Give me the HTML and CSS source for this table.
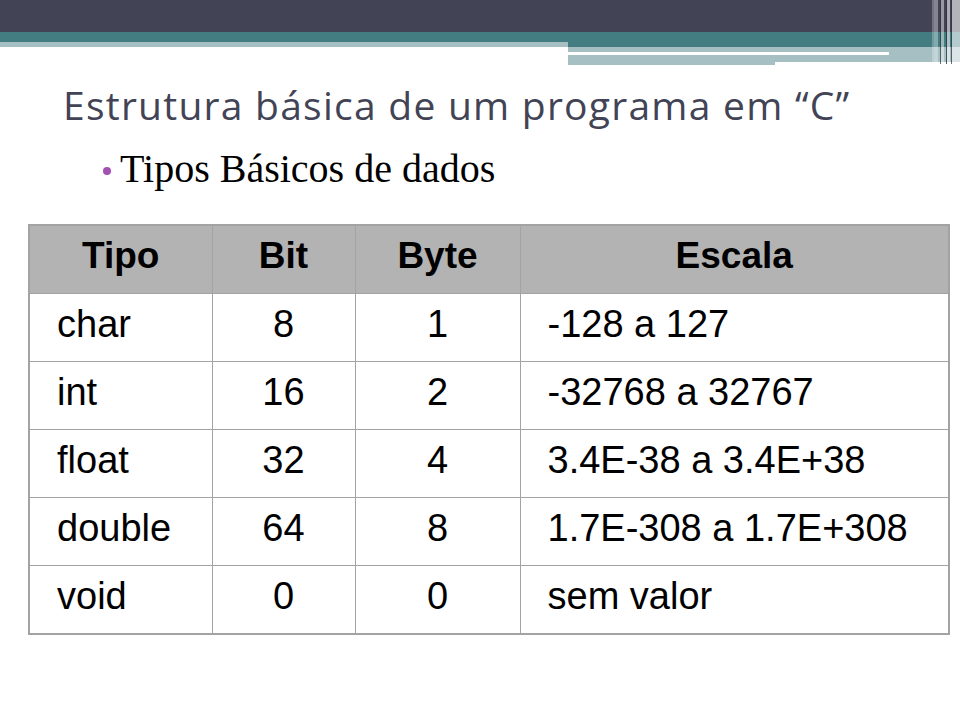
FILE: index.html
```html
<!DOCTYPE html>
<html lang="pt">
<head>
<meta charset="utf-8">
<title>Estrutura básica de um programa em “C”</title>
<link rel="stylesheet" href="styles.css">
</head>
<body>
<div class="slide">
  <header class="topbar">
    <div class="bar-dark"></div>
    <div class="bands">
      <div class="band-left">
        <div class="teal-thin"></div>
        <div class="light-thin"></div>
      </div>
      <div class="band-right">
        <div class="teal-wide"></div>
        <div class="light-a"></div>
        <div class="line-row"><div class="white-line"></div><div class="line-rest"></div></div>
        <div class="light-b"></div>
        <div class="tail-row"><div class="tail"></div></div>
      </div>
    </div>
    <svg class="stripes" width="28" height="64" viewBox="0 0 28 64" aria-hidden="true">
      <rect x="0" y="0" width="2" height="64" fill="#ffffff" fill-opacity="0.25"/>
      <rect x="2" y="0" width="4" height="64" fill="#ffffff" fill-opacity="0.35"/>
      <rect x="8" y="0" width="1" height="64" fill="#30323f" fill-opacity="0.7"/>
      <rect x="9" y="0" width="3" height="64" fill="#ffffff" fill-opacity="0.45"/>
      <rect x="14" y="0" width="1" height="64" fill="#30323f" fill-opacity="0.8"/>
      <rect x="15" y="0" width="3" height="64" fill="#ffffff" fill-opacity="0.55"/>
      <rect x="19" y="0" width="1" height="64" fill="#30323f" fill-opacity="0.7"/>
      <rect x="20" y="0" width="8" height="64" fill="#ffffff" fill-opacity="0.6"/>
    </svg>
  </header>

  <h1 class="title">Estrutura básica de um programa em “C”</h1>
  <ul class="bullets">
    <li>Tipos Básicos de dados</li>
  </ul>

  <table class="types">
    <colgroup>
      <col class="c-tipo">
      <col class="c-bit">
      <col class="c-byte">
      <col class="c-escala">
    </colgroup>
    <thead>
      <tr><th>Tipo</th><th>Bit</th><th>Byte</th><th>Escala</th></tr>
    </thead>
    <tbody>
      <tr><td class="left">char</td><td>8</td><td>1</td><td class="left">-128 a 127</td></tr>
      <tr><td class="left">int</td><td>16</td><td>2</td><td class="left">-32768 a 32767</td></tr>
      <tr><td class="left">float</td><td>32</td><td>4</td><td class="left">3.4E-38 a 3.4E+38</td></tr>
      <tr><td class="left">double</td><td>64</td><td>8</td><td class="left">1.7E-308 a 1.7E+308</td></tr>
      <tr><td class="left">void</td><td>0</td><td>0</td><td class="left">sem valor</td></tr>
    </tbody>
  </table>
</div>
</body>
</html>
```

FILE: styles.css
```css
html, body {
  margin: 0;
  padding: 0;
  background: #ffffff;
}

.slide {
  width: 960px;
  height: 720px;
  position: relative;
  overflow: hidden;
  background: #ffffff;
}

/* ---------- top decorative bar ---------- */
.topbar {
  position: relative;
  height: 65px;
}
.bar-dark {
  height: 32px;
  background: #424456;
}
.bands {
  display: flex;
}
.band-left {
  width: 568px;
}
.teal-thin {
  height: 10px;
  background: #437d81;
}
.light-thin {
  height: 5px;
  background: #a5bfc3;
}
.band-right {
  flex: 1;
}
.teal-wide {
  height: 15px;
  background: #437d81;
}
.light-a {
  height: 5px;
  background: #a5bfc3;
}
.line-row {
  display: flex;
  height: 3px;
}
.white-line {
  width: 321px;
  background: #ffffff;
}
.line-rest {
  flex: 1;
  background: #a5bfc3;
}
.light-b {
  height: 7px;
  background: #a5bfc3;
}
.tail-row {
  height: 3px;
}
.tail {
  width: 207px;
  height: 3px;
  background: #a5bfc3;
}
.stripes {
  position: absolute;
  top: 0;
  right: 0;
  display: block;
}

/* ---------- title ---------- */
.title {
  margin: 16px 0 0 63px;
  font-family: "Open Sans", "Noto Sans", sans-serif;
  font-weight: 400;
  font-size: 39px;
  line-height: 48px;
  color: #424456;
  letter-spacing: 1.25px;
  white-space: nowrap;
}

.bullets {
  margin: 18px 0 0 0;
  padding: 0 0 0 120px;
  list-style: none;
}
.bullets li {
  position: relative;
  font-family: "Liberation Serif", "Times New Roman", serif;
  font-size: 40px;
  line-height: 44px;
  color: #000000;
  white-space: nowrap;
}
.bullets li::before {
  content: "";
  position: absolute;
  left: -17px;
  top: 20px;
  width: 8px;
  height: 8px;
  border-radius: 50%;
  background: #a44fb3;
}

/* ---------- table ---------- */
.types {
  margin: 33px 0 0 28px;
  border-collapse: collapse;
  table-layout: fixed;
  width: 920px;
  border: 2px solid #a3a3a3;
  font-family: "Liberation Sans", Arial, sans-serif;
  font-size: 38px;
  color: #000000;
}
.c-tipo { width: 183px; }
.c-bit { width: 143px; }
.c-byte { width: 165px; }
.c-escala { width: 429px; }

.types th,
.types td {
  height: 59px;
  padding: 0 0 8px 0;
  border: 1px solid #a3a3a3;
  text-align: center;
  vertical-align: middle;
  line-height: 40px;
}
.types th {
  background: #b3b3b3;
  font-weight: 700;
  font-size: 37px;
}
.types td.left {
  text-align: left;
  padding-left: 27px;
}
```
